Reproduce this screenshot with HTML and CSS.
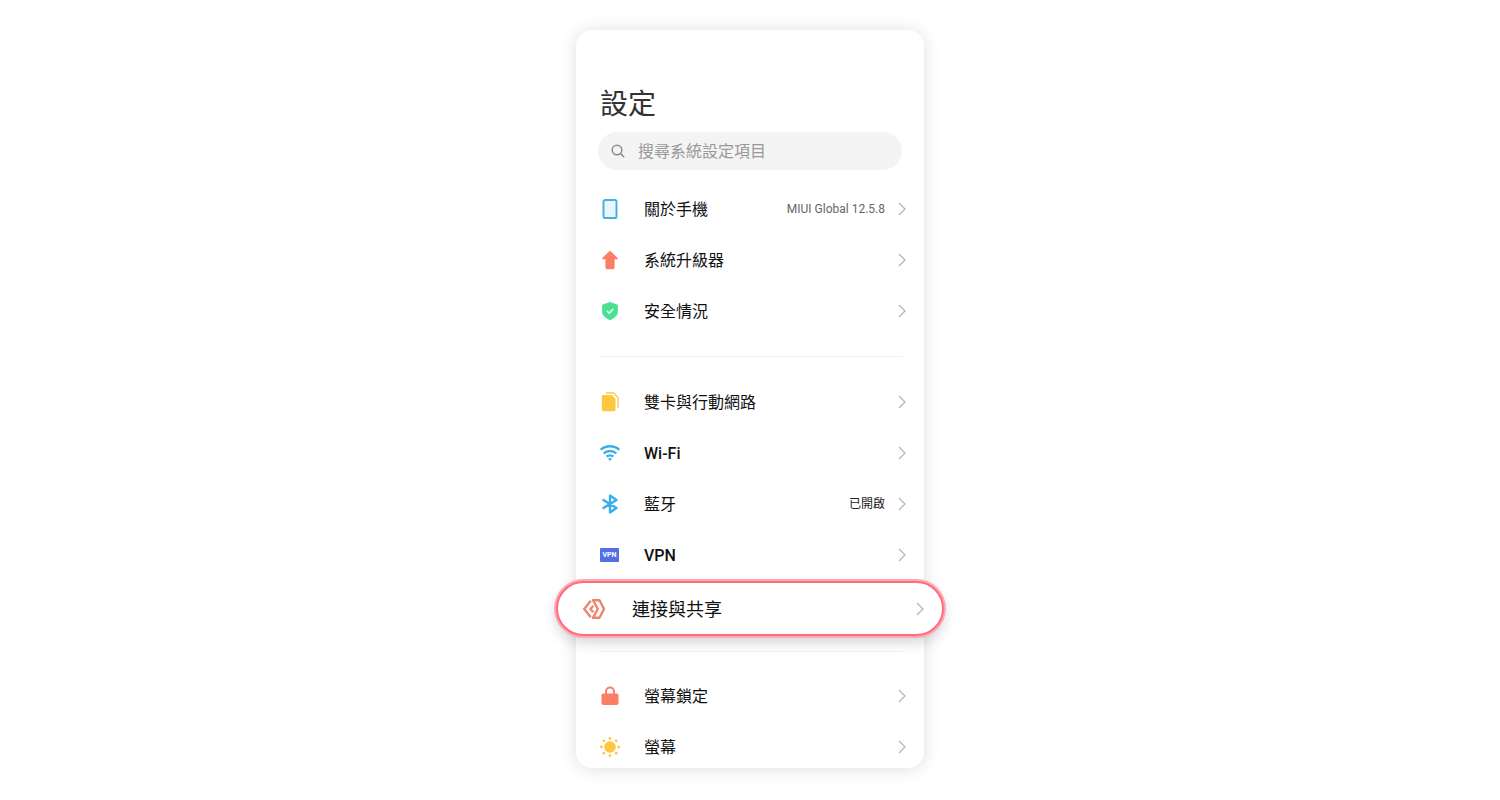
FILE: index.html
```html
<!DOCTYPE html>
<html lang="zh-Hant">
<head>
    <meta charset="UTF-8">
    <meta name="viewport" content="width=device-width, initial-scale=1.0">
    <title>設定</title>
    <link rel="stylesheet" href="styles.css">
</head>
<body>
    <svg class="sprite" aria-hidden="true">
        <symbol id="chevron" viewBox="0 0 8 14">
            <path d="M1 1l6 6-6 6" fill="none" stroke="#b5b5b5" stroke-width="1.3"/>
        </symbol>
    </svg>

    <main class="phone">
        <h1>設定</h1>

        <!-- 搜尋 -->
        <form class="search" role="search">
            <label for="search" aria-label="搜尋">
                <svg class="search-icon" viewBox="0 0 14 14">
                    <circle cx="6" cy="6" r="4.8"/>
                    <path d="M9.4 9.4l3.8 3.8"/>
                </svg>
            </label>
            <input type="search" id="search" name="search" placeholder="搜尋系統設定項目">
        </form>

        <!-- 手機資訊 -->
        <ul class="group">
            <li><a class="row" href="#about">
                <svg class="icon" viewBox="0 0 20 20"><rect x="3.5" y="1" width="13" height="18" rx="1.6" fill="#e9f6fd" stroke="#45afe0" stroke-width="1.9"/></svg>
                <span class="label">關於手機</span>
                <span class="value">MIUI Global 12.5.8</span>
                <svg class="chevron"><use href="#chevron"/></svg>
            </a></li>
            <li><a class="row" href="#update">
                <svg class="icon" viewBox="0 0 20 20"><path d="M10 1.4l7.4 7.2H14v9a1 1 0 0 1-1 1H7a1 1 0 0 1-1-1v-9H2.600z" fill="#fc7f65" stroke="#fc7f65" stroke-width="1.200" stroke-linejoin="round"/></svg>
                <span class="label">系統升級器</span>
                <svg class="chevron"><use href="#chevron"/></svg>
            </a></li>
            <li><a class="row" href="#security">
                <svg class="icon" viewBox="0 0 20 20"><path d="M10 1.5l7.3 2.6v7.4c0 3-3.2 5.3-7.3 7.2-4.1-1.900-7.300-4.200-7.300-7.200V4.100z" fill="#47e191" stroke="#47e191" stroke-linejoin="round"/><path d="M7 10l2.200 2.200 4-4.200" fill="none" stroke="#fff" stroke-width="1.500"/></svg>
                <span class="label">安全情況</span>
                <svg class="chevron"><use href="#chevron"/></svg>
            </a></li>
        </ul>

        <!-- 網路 -->
        <ul class="group">
            <li><a class="row" href="#sim">
                <svg class="icon" viewBox="0 0 20 20"><path d="M3.300 3h8.700l3.500 3.500V17.800A1.500 1.500 0 0 1 14 19.300H3.300a1.500 1.500 0 0 1-1.500-1.500V4.500A1.500 1.500 0 0 1 3.300 3z" fill="#fdc840"/><path d="M6 1h7.500l4.500 4.500V16" fill="none" stroke="#fdc840" stroke-width="1.300"/></svg>
                <span class="label">雙卡與行動網路</span>
                <svg class="chevron"><use href="#chevron"/></svg>
            </a></li>
            <li><a class="row" href="#wifi">
                <svg class="icon" viewBox="0 0 20 20"><g fill="none" stroke="#3bade9" stroke-width="2.400"><path d="M.7 6.700a14.200 14.200 0 0 1 18.600 0"/><path d="M3.700 10.300a9.600 9.600 0 0 1 12.600 0"/><path d="M6.600 13.600a5.200 5.200 0 0 1 6.800 0"/></g><path d="M8 15.800a3.200 3.200 0 0 1 4 0L10 18z" fill="#3bade9"/></svg>
                <span class="label" lang="en">Wi-Fi</span>
                <svg class="chevron"><use href="#chevron"/></svg>
            </a></li>
            <li><a class="row" href="#bluetooth">
                <svg class="icon" viewBox="0 0 20 20"><path d="M2.600 5.500L16.500 14 10 18.400V1.600L16.500 6 2.600 14.500" fill="none" stroke="#3bade9" stroke-width="2.400" stroke-linejoin="round"/></svg>
                <span class="label">藍牙</span>
                <span class="value dark">已開啟</span>
                <svg class="chevron"><use href="#chevron"/></svg>
            </a></li>
            <li><a class="row" href="#vpn">
                <span class="icon"><span class="vpn-icon">VPN</span></span>
                <span class="label" lang="en">VPN</span>
                <svg class="chevron"><use href="#chevron"/></svg>
            </a></li>
            <li><a class="row active" href="#share">
                <svg class="icon" viewBox="0 0 24 22"><g fill="none" stroke="#ee836e" stroke-width="2.400" stroke-linejoin="round"><path d="M8.800 2.800L2.200 11l6.600 8.200"/><path d="M11.300 7.800L8.500 11l2.800 3.200"/><path d="M11 2.200h6.500L22 11l-4.500 8.800H11L15.800 11z"/></g></svg>
                <span class="label">連接與共享</span>
                <svg class="chevron"><use href="#chevron"/></svg>
            </a></li>
        </ul>

        <!-- 螢幕 -->
        <ul class="group">
            <li><a class="row" href="#lock">
                <svg class="icon" viewBox="0 0 20 20"><rect x="1.500" y="7.500" width="17" height="11.500" rx="1.800" fill="#fc7f65"/><path d="M6 8V5.500a4 4 0 0 1 8 0V8" fill="none" stroke="#fc7f65" stroke-width="2"/></svg>
                <span class="label">螢幕鎖定</span>
                <svg class="chevron"><use href="#chevron"/></svg>
            </a></li>
            <li><a class="row" href="#display">
                <svg class="icon" viewBox="0 0 20 20"><g fill="#fdc840"><circle cx="10" cy="10" r="5.800"/><circle cx="10" cy="1.400" r="1.400"/><circle cx="10" cy="18.600" r="1.400"/><circle cx="1.400" cy="10" r="1.400"/><circle cx="18.600" cy="10" r="1.400"/><circle cx="3.800" cy="3.800" r="1.400"/><circle cx="16.200" cy="3.800" r="1.400"/><circle cx="3.800" cy="16.200" r="1.400"/><circle cx="16.200" cy="16.200" r="1.400"/></g></svg>
                <span class="label">螢幕</span>
                <svg class="chevron"><use href="#chevron"/></svg>
            </a></li>
        </ul>
    </main>
</body>
</html>
```
FILE: styles.css
```css
* {
    box-sizing: border-box;
}
body {
    margin: 0;
    padding: 30px 24px;
    background-color: #fff;
    font-family: Roboto, "Noto Sans CJK TC", sans-serif;
    color: #111;
}
.sprite {
    display: none;
}
.phone {
    display: flow-root;
    max-width: 348px;
    margin: 0 auto;
    padding-top: 54px;
    background-color: #fff;
    border-radius: 16px;
    box-shadow: 0 1px 18px rgba(0, 0, 0, 0.13);
}
h1 {
    margin: 0 24px 6px;
    font-size: 28px;
    font-weight: 400;
    line-height: 42px;
    color: #333;
}
.search {
    display: flex;
    align-items: center;
    gap: 13px;
    height: 38px;
    margin: 0 22px 13px;
    padding: 0 13px;
    background-color: #f4f4f4;
    border-radius: 19px;
}
.search label {
    display: flex;
}
.search-icon {
    width: 14px;
    height: 14px;
    fill: none;
    stroke: #8c8c8c;
    stroke-width: 1.5;
}
.search input {
    flex: 1;
    min-width: 0;
    padding: 2px 0 0;
    border: none;
    outline: none;
    background: none;
    font-family: inherit;
    font-size: 16px;
    line-height: 24px;
}
.search input::placeholder {
    color: #999;
}
.group {
    margin: 0;
    padding: 0;
    list-style: none;
}
.group + .group::before {
    content: "";
    display: block;
    height: 1px;
    margin: 20px 22px 19px;
    background-color: #f2f2f2;
}
.group:last-child::before {
    margin: 15px 22px 18px;
}
/* the last row runs under the bottom edge */
.group:last-child {
    margin-bottom: -4px;
}
.row {
    display: flex;
    align-items: center;
    height: 51px;
    padding: 0 18px 0 24px;
    color: inherit;
    text-decoration: none;
}
.icon {
    display: flex;
    align-items: center;
    flex: none;
    width: 20px;
    height: 20px;
    margin-right: 24px;
}
.label {
    flex: 1;
    padding-top: 2px;
    font-size: 16px;
    line-height: 24px;
}
.label:lang(en) {
    font-weight: 500;
}
.value {
    margin-right: 13px;
    padding-top: 1px;
    font-size: 12px;
    line-height: 18px;
    color: #666;
}
.value.dark {
    color: #222;
}
.chevron {
    flex: none;
    width: 8px;
    height: 14px;
}
.vpn-icon {
    width: 19px;
    background-color: #536fe6;
    border-radius: 1px;
    font-size: 7px;
    font-weight: 700;
    line-height: 14px;
    text-align: center;
    color: #fff;
}
.row.active {
    position: relative;
    height: 55px;
    margin: 1px -20px 0;
    padding: 0 18px 0 24px;
    background-color: #fff;
    border: 2px solid #ff6b81;
    border-radius: 28px;
    box-shadow: 0 0 0 2px #ffa9b5, 0 6px 14px rgba(0, 0, 0, 0.18);
}
.row.active .icon {
    width: 24px;
    height: 22px;
    margin-right: 26px;
}
.row.active .label {
    font-size: 18px;
}
```
